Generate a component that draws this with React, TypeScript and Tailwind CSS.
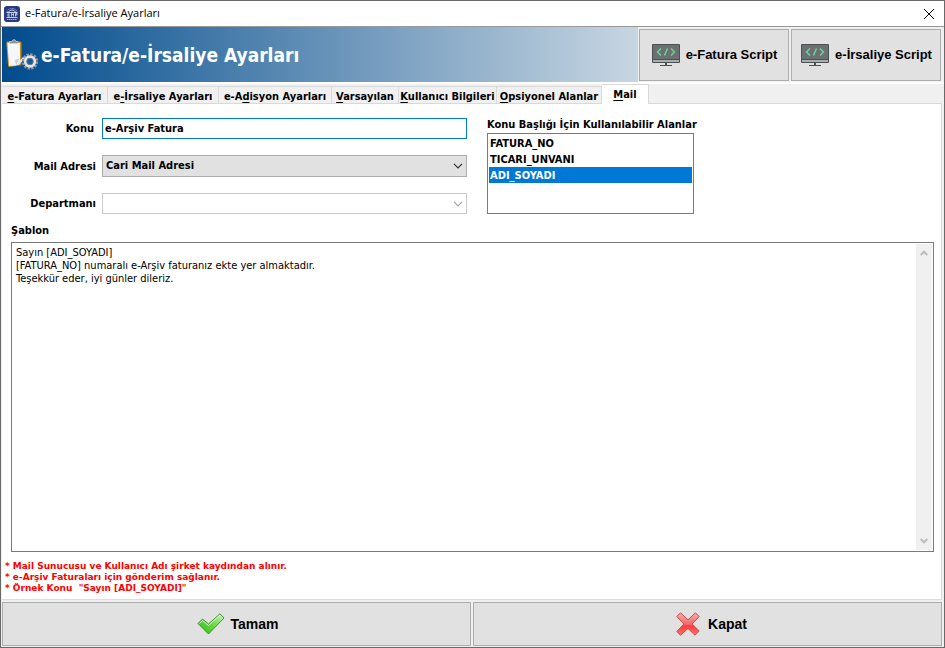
import { useState } from 'react';
import { clsx } from 'clsx';

const tabs = [
  { id: 'fatura', before: '', key: 'e', after: '-Fatura Ayarları', width: 'w-[106px]' },
  { id: 'irsaliye', before: 'e', key: '-', after: 'İrsaliye Ayarları', width: 'w-[111px]' },
  { id: 'adisyon', before: 'e-A', key: 'd', after: 'isyon Ayarları', width: 'w-[113px]' },
  { id: 'varsayilan', before: '', key: 'V', after: 'arsayılan', width: 'w-[67px]' },
  { id: 'kullanici', before: '', key: 'K', after: 'ullanıcı Bilgileri', width: 'w-[98px]' },
  { id: 'opsiyonel', before: '', key: 'O', after: 'psiyonel Alanlar', width: 'w-[105px]' },
  { id: 'mail', before: '', key: 'M', after: 'ail', width: 'w-[47px]' },
];

const fields = ['FATURA_NO', 'TICARI_UNVANI', 'ADI_SOYADI'];

const template = `Sayın [ADI_SOYADI]
[FATURA_NO] numaralı e-Arşiv faturanız ekte yer almaktadır.
Teşekkür eder, iyi günler dileriz.`;

const AppIcon = () => (
  <svg className="w-4 h-4" viewBox="0 0 16 16" fill="none">
    <rect width="16" height="16" rx="3" fill="#2a3a80" />
    <path d="M3 6Q4 2.500 8 2.500T13 6" stroke="#8d9cd2" strokeDasharray="1.500 .7" />
    <path d="M4.500 6Q5.500 4 8 4t3.500 2M2.500 6.500h11M2.500 11.500h11" stroke="#c6d0ee" />
    <path d="M4 7.500v3M4 8h2M4 10h2M7.500 10.500v-3l1 1.500 1-1.500v3M11.500 10.500v-3h1.500v1.500h-1.500" stroke="#dfe5f7" strokeWidth=".8" />
    <path d="M3 13.500h10" stroke="#aab6e0" strokeDasharray="1.500 .5" />
  </svg>
);

const ClipboardIcon = () => (
  <svg className="w-8 h-8 shrink-0" viewBox="0 0 32 32">
    <defs>
      <linearGradient id="board" x1="0" y1="0" x2="1" y2="1">
        <stop offset="0" stopColor="#e0a42a" />
        <stop offset="1" stopColor="#c07a0c" />
      </linearGradient>
    </defs>
    <path d="M1.500 2.500h12.500q1.500 0 1.500 1.500V25q0 1.500-1.500 1.500L3.500 28Q2 28 2 26L.5 4.500Q.5 2.500 1.500 2.500z" fill="url(#board)" />
    <path d="M1.500 4h12.300L14.200 22l-4 4.500-7.200.5z" fill="#f5f7fa" />
    <path d="M14 19l-5 2 1 5z" fill="#c9ced5" />
    <path d="M3.500 4.500V2.500h2.500Q6.500.5 8 .5t2 2h2v2z" fill="#8b9299" stroke="#d4d8dc" strokeWidth=".6" />
    <path d="M10 26l7-8 2 1-6 7z" fill="#e3e7eb" />
    <circle cx="24" cy="22.500" r="7" fill="none" stroke="#94979b" strokeWidth="2.400" strokeDasharray="2.400 1.265" />
    <circle cx="24" cy="22.500" r="4.800" fill="#17599a" stroke="#e2e4e6" strokeWidth="2.800" />
    <circle cx="24" cy="22.500" r="3.200" fill="none" stroke="#797d82" strokeWidth=".8" />
  </svg>
);

const MonitorIcon = () => (
  <svg className="w-7 h-[22px] shrink-0" viewBox="0 0 28 22" fill="none">
    <rect width="28" height="19" rx="1" fill="#4b5052" />
    <rect x="1" y="1" width="26" height="14" fill="#6b7173" />
    <rect x="1" y="16" width="26" height="2" fill="#a9afad" />
    <path d="M13 19h2v2h-2z" fill="#4b5052" />
    <path d="M8 21.500h12" stroke="#4b5052" />
    <path d="M9 4.500L5.500 8 9 11.500M19 4.500L22.500 8 19 11.500M15.500 4.500l-3 7" stroke="#6fd097" strokeWidth="1.500" />
  </svg>
);

const CheckIcon = () => (
  <svg className="w-7 h-[22px] shrink-0" viewBox="0 0 28 22">
    <defs>
      <linearGradient id="check" x1="1" y1="0" x2="0" y2="1">
        <stop offset="0" stopColor="#d8f7d2" />
        <stop offset=".4" stopColor="#7bdc55" />
        <stop offset="1" stopColor="#22b80d" />
      </linearGradient>
    </defs>
    <path d="M1 10.500l4.500-4.500 6 5L23 .8l4 4.200-15.500 16z" fill="url(#check)" stroke="#3d9631" strokeLinejoin="round" />
    <path d="M2.500 10.500l3-3 6 5L22.800 2.200" fill="none" stroke="#e4ffdd" strokeWidth=".8" />
  </svg>
);

const CrossIcon = () => (
  <svg className="w-6 h-6 shrink-0" viewBox="0 0 24 24">
    <defs>
      <linearGradient id="cross" x1="0" y1="0" x2="0" y2="1">
        <stop offset="0" stopColor="#f9b0aa" />
        <stop offset=".52" stopColor="#f0686a" />
        <stop offset=".58" stopColor="#fc3a3c" />
        <stop offset="1" stopColor="#ff7570" />
      </linearGradient>
    </defs>
    <path
      d="M.8 4.500L4.500.8l7.500 7L19.500.8l3.700 3.700-7 7.500 7 7-4.200 4.200-7-6.700-7.500 6.700-3.700-3.700 7-7.500z"
      fill="url(#cross)"
      stroke="#c94b49"
      strokeLinejoin="round"
    />
  </svg>
);

const Chevron = ({ className }: { className?: string }) => (
  <svg className={clsx('w-[10px] h-[6px]', className)} viewBox="0 0 10 6" fill="none" stroke="currentColor">
    <path d="M1 .8l4 4 4-4" strokeWidth="1.200" />
  </svg>
);

const ScrollArrow = ({ className }: { className?: string }) => (
  <svg className={clsx('w-2 h-[6px]', className)} viewBox="0 0 8 6" fill="none" stroke="#bcbcbc">
    <path d="M.7 1L4 4.300 7.300 1" strokeWidth="2" />
  </svg>
);

const ScriptButton = ({ label }: { label: string }) => (
  <button
    type="button"
    className="flex h-[52px] w-[150px] items-center justify-center gap-[6px] border border-[#adadad] bg-[#e1e1e1] pl-px font-['Liberation_Sans',Arial,sans-serif] text-[13px] font-bold whitespace-nowrap"
  >
    <MonitorIcon />
    <span className="pt-px">{label}</span>
  </button>
);

const App = () => {
  const [activeTab, setActiveTab] = useState('mail');
  const [selectedField, setSelectedField] = useState('ADI_SOYADI');

  return (
    <div className="flex min-h-screen flex-col border border-[#696969] bg-[#f0f0f0] font-['DejaVu_Sans_Condensed','DejaVu_Sans',Tahoma,sans-serif] text-[11px] text-black">
      {/* Title bar */}
      <div className="flex h-[26px] items-center gap-[5px] border-b border-[#999999] bg-white pl-[3px] font-['Open_Sans','Segoe_UI',sans-serif] text-[11px]">
        <AppIcon />
        <span className="flex-1">e-Fatura/e-İrsaliye Ayarları</span>
        <button type="button" aria-label="Pencereyi kapat" className="flex h-full w-[31px] items-center justify-center">
          <svg className="w-[10px] h-[10px]" viewBox="0 0 10 10" stroke="#000">
            <path d="M0 0l10 10M10 0L0 10" />
          </svg>
        </button>
      </div>

      {/* Header */}
      <header className="flex h-[57px] border-b-2 border-white pl-px">
        <div className="flex flex-1 items-center gap-[3px] bg-linear-to-r/srgb from-[#004b8d] to-[#c8d6e2] pl-1">
          <ClipboardIcon />
          <h1 className="pt-[2px] text-[19px] font-bold text-white">e-Fatura/e-İrsaliye Ayarları</h1>
        </div>
        <div className="flex items-center gap-[2px] pl-px pr-[3px]">
          <ScriptButton label="e-Fatura Script" />
          <ScriptButton label="e-İrsaliye Script" />
        </div>
      </header>

      {/* Tabs */}
      <div role="tablist" className="flex h-5 items-end pl-px">
        {tabs.map((tab) => (
          <button
            key={tab.id}
            id={`tab-${tab.id}`}
            type="button"
            role="tab"
            aria-selected={activeTab === tab.id}
            onClick={() => setActiveTab(tab.id)}
            className={clsx(
              'border-r border-[#d9d9d9] text-center leading-4 font-bold whitespace-nowrap',
              tab.width,
              activeTab === tab.id ? 'h-5 border-t bg-white' : 'h-[18px] border-y bg-[#f0f0f0] pt-[2px]',
            )}
          >
            {tab.before}
            <span className="underline underline-offset-2">{tab.key}</span>
            {tab.after}
          </button>
        ))}
        <div className="mr-[2px] flex-1 border-b border-[#d9d9d9]" />
      </div>

      {/* Mail settings */}
      <main
        role="tabpanel"
        aria-labelledby="tab-mail"
        className="mr-[2px] ml-px flex flex-1 flex-col border-r border-b border-[#dcdcdc] bg-white"
      >
        <div className="flex gap-5 pt-[14px] font-bold">
          <div className="flex w-[465px] flex-col gap-4">
            <div className="flex items-center">
              <label htmlFor="konu" className="w-[100px] pt-[2px] pr-2 text-right">Konu</label>
              <input
                id="konu"
                type="text"
                defaultValue="e-Arşiv Fatura"
                className="h-[21px] min-w-0 flex-1 border border-[#0078d7] px-[2px] outline-none"
              />
            </div>
            <div className="flex items-center">
              <label htmlFor="mail-adresi" className="w-[100px] pt-[2px] pr-[6px] text-right">Mail Adresi</label>
              <div className="relative flex flex-1">
                <select
                  id="mail-adresi"
                  className="h-[22px] w-full appearance-none border border-[#adadad] bg-[#e1e1e1] px-[3px] outline-none"
                >
                  <option>Cari Mail Adresi</option>
                </select>
                <Chevron className="pointer-events-none absolute top-2 right-1 text-[#333333]" />
              </div>
            </div>
            <div className="flex items-center">
              <label htmlFor="departmani" className="w-[100px] pt-[2px] pr-[6px] text-right">Departmanı</label>
              <div className="relative flex flex-1">
                <select
                  id="departmani"
                  disabled
                  className="h-[21px] w-full appearance-none border border-[#cccccc] bg-white px-[3px]"
                />
                <Chevron className="pointer-events-none absolute top-2 right-1 text-[#a8a8a8]" />
              </div>
            </div>
          </div>

          <div className="flex flex-col">
            <span id="alanlar" className="h-[15px] leading-[14px] whitespace-nowrap">
              Konu Başlığı İçin Kullanılabilir Alanlar
            </span>
            <ul role="listbox" aria-labelledby="alanlar" className="h-[81px] w-[207px] border border-[#7a7a85] p-px">
              {fields.map((field) => (
                <li
                  key={field}
                  role="option"
                  aria-selected={selectedField === field}
                  onClick={() => setSelectedField(field)}
                  className={clsx('h-4 px-px leading-[18px]', selectedField === field && 'bg-[#0078d7] text-white')}
                >
                  {field}
                </li>
              ))}
            </ul>
          </div>
        </div>

        <label htmlFor="sablon" className="mt-2 ml-[9px] h-5 leading-[18px] font-bold">Şablon</label>
        <div className="mr-[7px] ml-[9px] flex flex-1 border border-[#7a7a7a]">
          <textarea
            id="sablon"
            defaultValue={template}
            className="min-w-0 flex-1 resize-none overflow-hidden px-1 py-[3px] leading-[13px] outline-none"
          />
          <div className="my-px mr-px flex w-4 flex-col items-center justify-between bg-[#f0f0f0] py-[6px]">
            <ScrollArrow className="rotate-180" />
            <ScrollArrow />
          </div>
        </div>

        <div className="h-[47px] pt-[9px] pl-[3px] font-['DejaVu_Sans',Verdana,sans-serif] text-[9px] leading-[11px] font-bold text-[#ff0000]">
          <p>* Mail Sunucusu ve Kullanıcı Adı şirket kaydından alınır.</p>
          <p>* e-Arşiv Faturaları için gönderim sağlanır.</p>
          <p className="whitespace-pre">* Örnek Konu  "Sayın [ADI_SOYADI]"</p>
        </div>
      </main>

      {/* Actions */}
      <footer className="grid grid-cols-2 gap-[2px] pt-[2px] pr-[2px] pb-px pl-px font-['Liberation_Sans',Arial,sans-serif] text-[14px] font-bold">
        <button type="button" className="flex h-[44px] items-center justify-center gap-[6px] border border-[#adadad] bg-[#e1e1e1] pl-[2px]">
          <CheckIcon />
          Tamam
        </button>
        <button type="button" className="flex h-[44px] items-center justify-center gap-2 border border-[#adadad] bg-[#e1e1e1] pl-2">
          <CrossIcon />
          Kapat
        </button>
      </footer>
    </div>
  );
};

export default App;
